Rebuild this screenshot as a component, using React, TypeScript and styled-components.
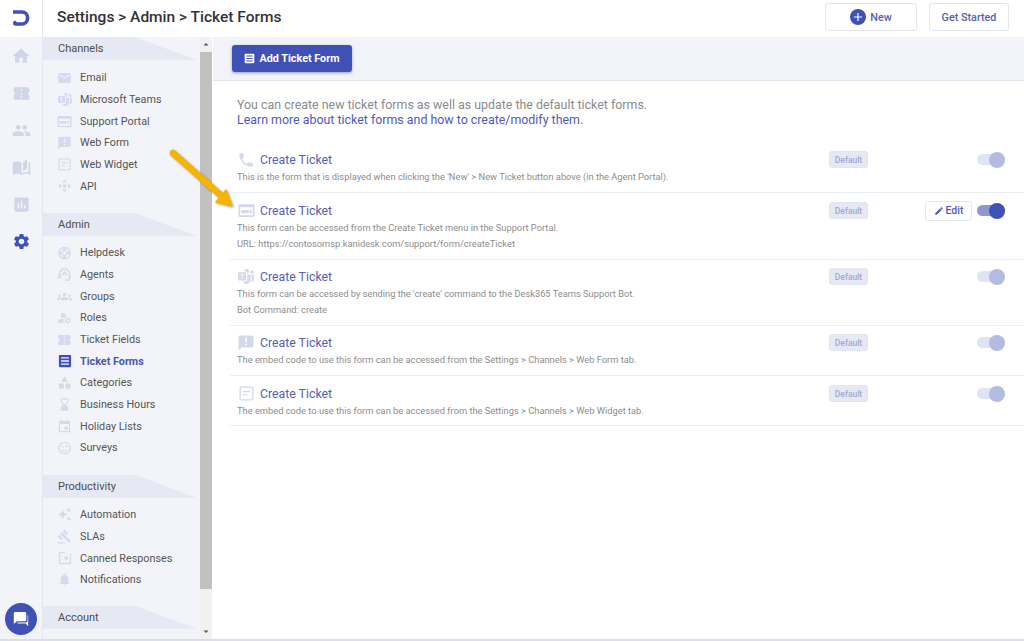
import React from "react";
import styled, { createGlobalStyle } from "styled-components";
import { BsMicrosoftTeams } from "react-icons/bs";
import {
  MdHome, MdConfirmationNumber, MdPeople, MdAutoStories, MdAssessment, MdSettings, MdEmail,
  MdAnnouncement, MdOutlineSupport, MdGroups,
  MdManageAccounts, MdCategory, MdHourglassBottom, MdEvent, MdOutlineSentimentSatisfied,
  MdAutoAwesome, MdGavel, MdNotifications, MdPhone, MdEdit,
  MdAdd, MdControlCamera, MdArrowDropUp, MdArrowDropDown,
} from "react-icons/md";

const Global = createGlobalStyle`
  html, body { margin: 0; padding: 0; height: 100%; background: #fff; overflow: hidden; }
  body { font-family: Roboto, "Liberation Sans", sans-serif; }
  #root { height: 641px; }
  * { box-sizing: border-box; }
`;

const Page = styled.div`
  position: relative;
  width: 1024px;
  height: 641px;
  display: flex;
  flex-direction: column;
  overflow: hidden;
  border-bottom: 2px solid #d9deee;
`;
const TopBar = styled.header`
  height: 37px;
  flex: none;
  display: flex;
  align-items: center;
  background: #fff;
`;
const LogoCell = styled.div`
  width: 43px;
  height: 100%;
  flex: none;
  display: flex;
  align-items: center;
  justify-content: center;
  border-right: 1px solid #e6e8f0;
  padding-bottom: 1px;
`;
const Title = styled.h1`
  margin: 0 0 3px 14px;
  flex: 1;
  font-size: 15.5px;
  font-weight: 500;
  color: #333;
`;
const TopButton = styled.button<{ $w: number; $gap: number }>`
  width: ${(p) => p.$w}px;
  height: 28px;
  margin-right: ${(p) => p.$gap}px;
  margin-bottom: 3px;
  display: flex;
  align-items: center;
  justify-content: center;
  gap: 4px;
  background: #fff;
  border: 1px solid #e4e6ee;
  border-radius: 3px;
  color: #5560b4;
  font: 500 10.8px Roboto, sans-serif;
`;
const PlusCircle = styled.span`
  width: 16px;
  height: 16px;
  border-radius: 50%;
  background: #3f51b5;
  color: #fff;
  display: flex;
  align-items: center;
  justify-content: center;
`;
const Body = styled.div`
  flex: 1;
  min-height: 0;
  display: flex;
`;
const Rail = styled.nav`
  width: 43px;
  flex: none;
  background: #f2f4fa;
  border-right: 1px solid #e3e6ef;
  display: flex;
  flex-direction: column;
  align-items: center;
  padding: 10px 0 0 0;
  gap: 19.2px;
`;
const RailIcon = styled.span<{ $active?: boolean }>`
  display: flex;
  height: 18px;
  align-items: center;
  color: ${(p) => (p.$active ? "#3f51b5" : "#d0d5e8")};
`;
const Sidebar = styled.aside`
  width: 157px;
  flex: none;
  background: #f2f4fa;
  overflow: hidden;
`;
const SectionHead = styled.div`
  height: 23px;
  width: 154px;
  background: #e6e9f3;
  clip-path: polygon(0 0, 92px 0, 100% 100%, 0 100%);
  padding-left: 15px;
  font-size: 11px;
  line-height: 23px;
  color: #4d4d4d;
`;
const SectionList = styled.ul<{ $top: number; $bottom: number }>`
  list-style: none;
  margin: 0;
  padding: ${(p) => p.$top}px 0 ${(p) => p.$bottom}px;
`;
const Item = styled.li<{ $active?: boolean }>`
  height: 21.7px;
  display: flex;
  align-items: center;
  padding-left: 14px;
  gap: 8px;
  font-size: 10.8px;
  color: ${(p) => (p.$active ? "#4a56b4" : "#555")};
  font-weight: ${(p) => (p.$active ? 700 : 400)};
`;
const ItemIcon = styled.span<{ $active?: boolean }>`
  width: 15px;
  display: flex;
  justify-content: center;
  color: ${(p) => (p.$active ? "#3f51b5" : "#d6daec")};
`;
const Scrollbar = styled.div`
  width: 13px;
  flex: none;
  background: #f1f1f1;
  display: flex;
  flex-direction: column;
  border-right: 1px solid #fff;
`;
const ScrollArrow = styled.div`
  height: 15px;
  flex: none;
  display: flex;
  align-items: center;
  justify-content: center;
  color: #555;
`;
const ScrollThumb = styled.div`
  height: 537px;
  flex: none;
  background: #c1c1c1;
`;
const ScrollGap = styled.div`
  flex: 1;
`;
const Main = styled.main`
  flex: 1;
  min-width: 0;
  display: flex;
  flex-direction: column;
  background: #fff;
`;
const ActionBar = styled.div`
  height: 44px;
  flex: none;
  background: #f1f3f9;
  border-bottom: 1px solid #e2e5f0;
  padding: 8px 0 0 19px;
`;
const AddButton = styled.button`
  width: 120px;
  height: 27px;
  display: flex;
  align-items: center;
  justify-content: center;
  gap: 4px;
  border: none;
  border-radius: 3px;
  background: #3f51b5;
  color: #fff;
  font: 700 10.8px Roboto, sans-serif;
  box-shadow: 0 1px 3px rgba(40, 50, 110, 0.45);
`;
const Intro = styled.div`
  padding: 16px 0 0 24px;
  font-size: 12.4px;
  line-height: 15px;
  color: #8b8b8b;
`;
const IntroLink = styled.a`
  display: block;
  color: #4f5bb8;
`;
const Rows = styled.section`
  margin: 15px 0 0 17px;
  display: flex;
  flex-direction: column;
`;
const Row = styled.article<{ $h: number; $pad: number }>`
  height: ${(p) => p.$h}px;
  border-bottom: 1px solid #eceef6;
  display: flex;
  align-items: flex-start;
  padding: ${(p) => p.$pad}px 19px 0 7px;
`;
const RowText = styled.div`
  flex: 1;
  min-width: 0;
`;
const RowTitle = styled.div`
  display: flex;
  align-items: center;
  gap: 5px;
  height: 19px;
  font-size: 12.3px;
  color: #5560b8;
`;
const RowIcon = styled.span`
  width: 18px;
  display: flex;
  justify-content: center;
  color: #d3d8ec;
`;
const RowDesc = styled.p`
  margin: 0;
  font-size: 9.3px;
  line-height: 15.5px;
  color: #8d8d8d;
`;
const Badge = styled.span`
  width: 39px;
  height: 17px;
  margin-top: 1px;
  display: flex;
  align-items: center;
  justify-content: center;
  border: 1px solid #e2e5f1;
  border-radius: 3px;
  background: #e6e9f3;
  color: #a0a8d0;
  font-size: 8.5px;
  font-weight: 500;
`;
const Actions = styled.div`
  width: 137px;
  display: flex;
  align-items: center;
  justify-content: flex-end;
  gap: 5px;
  height: 19px;
`;
const EditButton = styled.button`
  width: 47px;
  height: 20px;
  display: flex;
  align-items: center;
  justify-content: center;
  gap: 2px;
  padding: 0;
  background: #fff;
  border: 1px solid #e6e8f1;
  border-radius: 3px;
  color: #4f5bb8;
  font: 500 10.5px Roboto, sans-serif;
`;
const Toggle = styled.span<{ $on?: boolean }>`
  position: relative;
  width: 28px;
  height: 11px;
  border-radius: 6px;
  background: ${(p) => (p.$on ? "#8c97d3" : "#e0e3f3")};
  &::after {
    content: "";
    position: absolute;
    right: 0;
    top: -2.5px;
    width: 16px;
    height: 16px;
    border-radius: 50%;
    background: ${(p) => (p.$on ? "#3f51b5" : "#b3bbe1")};
  }
`;
const ChatBubble = styled.div`
  position: absolute;
  left: 5px;
  top: 603px;
  width: 32px;
  height: 32px;
  border-radius: 50%;
  background: #3f51b5;
  display: flex;
  align-items: center;
  justify-content: center;
`;
const ArrowMark = styled.svg`
  position: absolute;
  left: 160px;
  top: 140px;
  filter: drop-shadow(1px 1.5px 1.2px rgba(60, 60, 60, 0.45));
`;

const PortalIcon = ({ size = 15 }: { size?: number }) => (
  <svg width={size} height={size} viewBox="0 0 16 16" fill="currentColor">
    <path fillRule="evenodd" d="M1.5 2h13a1 1 0 0 1 1 1v10a1 1 0 0 1-1 1h-13a1 1 0 0 1-1-1V3a1 1 0 0 1 1-1Zm.5 3v7.5h12V5H2Z" />
    <path d="M3 7.5h7v3H3zM11 7.5h2v3h-2z" />
  </svg>
);
const WidgetIcon = ({ size = 15 }: { size?: number }) => (
  <svg width={size} height={size} viewBox="0 0 16 16" fill="none" stroke="currentColor">
    <rect x="1.2" y="1.2" width="13.6" height="13.6" rx="1.2" strokeWidth="1.4" />
    <path d="M4 6h8M4 9.5h5" strokeWidth="1.4" />
  </svg>
);
const FormIcon = ({ size = 15, line }: { size?: number; line: string }) => (
  <svg width={size} height={size} viewBox="0 0 16 16" fill="currentColor">
    <rect x="1" y="1" width="14" height="14" rx="1.2" />
    <path d="M3.5 4.5h9M3.5 8h9M3.5 11.5h9" stroke={line} strokeWidth="1.5" />
  </svg>
);
const AgentIcon = () => (
  <svg width="15" height="15" viewBox="0 0 16 16" fill="none" stroke="currentColor" strokeWidth="1.7" strokeLinecap="round">
    <path d="M2.5 11 V8 A5.5 6 0 0 1 13.5 8 V12 A2 2 0 0 1 11.5 14 H9.5" />
    <path d="M5.5 8.5 L8 5.5 L10.5 8.5" />
    <path d="M1.5 9.5 V12 M4 9.5 V12" strokeWidth="1.2" />
  </svg>
);
const CannedIcon = () => (
  <svg width="14" height="14" viewBox="0 0 16 16" fill="none" stroke="currentColor" strokeWidth="1.5">
    <path d="M8 1.7 H2.7 A1 1 0 0 0 1.7 2.7 V13.3 A1 1 0 0 0 2.7 14.3 H13.3 A1 1 0 0 0 14.3 13.3 V3.5" />
    <path d="M9.5 5.5 V10.5 M7 8 H12" strokeWidth="1.9" />
  </svg>
);
const ChatIcon = () => (
  <svg width="20" height="20" viewBox="0 0 20 20">
    <path d="M4 3 H14 A1.2 1.2 0 0 1 15.2 4.2 V11 A1.2 1.2 0 0 1 14 12.2 H6 L2.8 15 V4.2 A1.2 1.2 0 0 1 4 3 Z" fill="#fff" />
    <path d="M16.6 6.2 H17.2 V17.2 L14.6 14.6 H6.4 V13.6 H14.6 A2 2 0 0 0 16.6 11.6 Z" fill="#fff" />
  </svg>
);

const sections = [
  {
    name: "Channels", top: 7, bottom: 15.8,
    items: [
      ["Email", <MdEmail size={16} />],
      ["Microsoft Teams", <BsMicrosoftTeams size={14} />],
      ["Support Portal", <PortalIcon size={15} />],
      ["Web Form", <MdAnnouncement size={16} />],
      ["Web Widget", <WidgetIcon size={13} />],
      ["API", <MdControlCamera size={16} />],
    ],
  },
  {
    name: "Admin", top: 6, bottom: 16,
    items: [
      ["Helpdesk", <MdOutlineSupport size={16} />],
      ["Agents", <AgentIcon />],
      ["Groups", <MdGroups size={17} />],
      ["Roles", <MdManageAccounts size={16} />],
      ["Ticket Fields", <MdConfirmationNumber size={16} />],
      ["Ticket Forms", <FormIcon size={14} line="#f2f4fa" />, true],
      ["Categories", <MdCategory size={15} />],
      ["Business Hours", <MdHourglassBottom size={15} />],
      ["Holiday Lists", <MdEvent size={15} />],
      ["Surveys", <MdOutlineSentimentSatisfied size={16} />],
    ],
  },
  {
    name: "Productivity", top: 6, bottom: 15.2,
    items: [
      ["Automation", <MdAutoAwesome size={15} />],
      ["SLAs", <MdGavel size={15} />],
      ["Canned Responses", <CannedIcon />],
      ["Notifications", <MdNotifications size={15} />],
    ],
  },
] as const;

const rows = [
  { h: 51, pad: 8, icon: <MdPhone size={18} />, lines: ["This is the form that is displayed when clicking the 'New' > New Ticket button above (in the Agent Portal)."] },
  { h: 67, pad: 8, icon: <PortalIcon size={17} />, edit: true, lines: ["This form can be accessed from the Create Ticket menu in the Support Portal.", "URL: https://contosomsp.kanidesk.com/support/form/createTicket"] },
  { h: 66, pad: 7, icon: <BsMicrosoftTeams size={16} />, lines: ["This form can be accessed by sending the 'create' command to the Desk365 Teams Support Bot.", "Bot Command: create"] },
  { h: 50, pad: 7, icon: <MdAnnouncement size={18} />, lines: ["The embed code to use this form can be accessed from the Settings > Channels > Web Form tab."] },
  { h: 50, pad: 8, icon: <WidgetIcon size={15} />, lines: ["The embed code to use this form can be accessed from the Settings > Channels > Web Widget tab."] },
];

export default function App() {
  return (
    <Page>
      <Global />
      <TopBar>
        <LogoCell>
          <svg width="20" height="18" viewBox="0 0 20 18" fill="none" stroke="#3f51b5" strokeWidth="3.6">
            <path d="M2 3 H11 A5.6 6 0 0 1 11 15 H4" />
            <circle cx="4" cy="13.2" r="1.4" fill="#3f51b5" stroke="none" />
            <path d="M2.2 14.4 H5" />
          </svg>
        </LogoCell>
        <Title>Settings &gt; Admin &gt; Ticket Forms</Title>
        <TopButton $w={92} $gap={12}>
          <PlusCircle><MdAdd size={14} /></PlusCircle>
          New
        </TopButton>
        <TopButton $w={80} $gap={15}>Get Started</TopButton>
      </TopBar>
      <Body>
        <Rail>
          <RailIcon><MdHome size={20} /></RailIcon>
          <RailIcon><MdConfirmationNumber size={19} /></RailIcon>
          <RailIcon><MdPeople size={19} /></RailIcon>
          <RailIcon><MdAutoStories size={19} /></RailIcon>
          <RailIcon><MdAssessment size={19} /></RailIcon>
          <RailIcon $active><MdSettings size={19} /></RailIcon>
        </Rail>
        <Sidebar>
          {sections.map((s) => (
            <div key={s.name}>
              <SectionHead>{s.name}</SectionHead>
              <SectionList $top={s.top} $bottom={s.bottom}>
                {s.items.map((it) => (
                  <Item key={it[0]} $active={it.length > 2}>
                    <ItemIcon $active={it.length > 2}>{it[1]}</ItemIcon>
                    {it[0]}
                  </Item>
                ))}
              </SectionList>
            </div>
          ))}
          <SectionHead>Account</SectionHead>
        </Sidebar>
        <Scrollbar>
          <ScrollArrow><MdArrowDropUp size={13} /></ScrollArrow>
          <ScrollThumb />
          <ScrollGap />
          <ScrollArrow><MdArrowDropDown size={13} /></ScrollArrow>
        </Scrollbar>
        <Main>
          <ActionBar>
            <AddButton><FormIcon size={11} line="#3f51b5" />Add Ticket Form</AddButton>
          </ActionBar>
          <Intro>
            You can create new ticket forms as well as update the default ticket forms.
            <IntroLink>Learn more about ticket forms and how to create/modify them.</IntroLink>
          </Intro>
          <Rows>
            {rows.map((r, i) => (
              <Row key={i} $h={r.h} $pad={r.pad}>
                <RowText>
                  <RowTitle>
                    <RowIcon>{r.icon}</RowIcon>
                    Create Ticket
                  </RowTitle>
                  {r.lines.map((l) => <RowDesc key={l}>{l}</RowDesc>)}
                </RowText>
                <Badge>Default</Badge>
                <Actions>
                  {r.edit && <EditButton><MdEdit size={10} />Edit</EditButton>}
                  <Toggle $on={r.edit} />
                </Actions>
              </Row>
            ))}
          </Rows>
        </Main>
      </Body>
      <ChatBubble><ChatIcon /></ChatBubble>
      <ArrowMark width="90" height="80" viewBox="0 0 90 80" fill="none">
        <path d="M13 13 L65 59" stroke="#f5b400" strokeWidth="6.5" strokeLinecap="round" />
        <path d="M66 50 L72 66 L56 62 Z" fill="#f5b400" stroke="#f5b400" strokeWidth="1.5" strokeLinejoin="round" />
      </ArrowMark>
    </Page>
  );
}
